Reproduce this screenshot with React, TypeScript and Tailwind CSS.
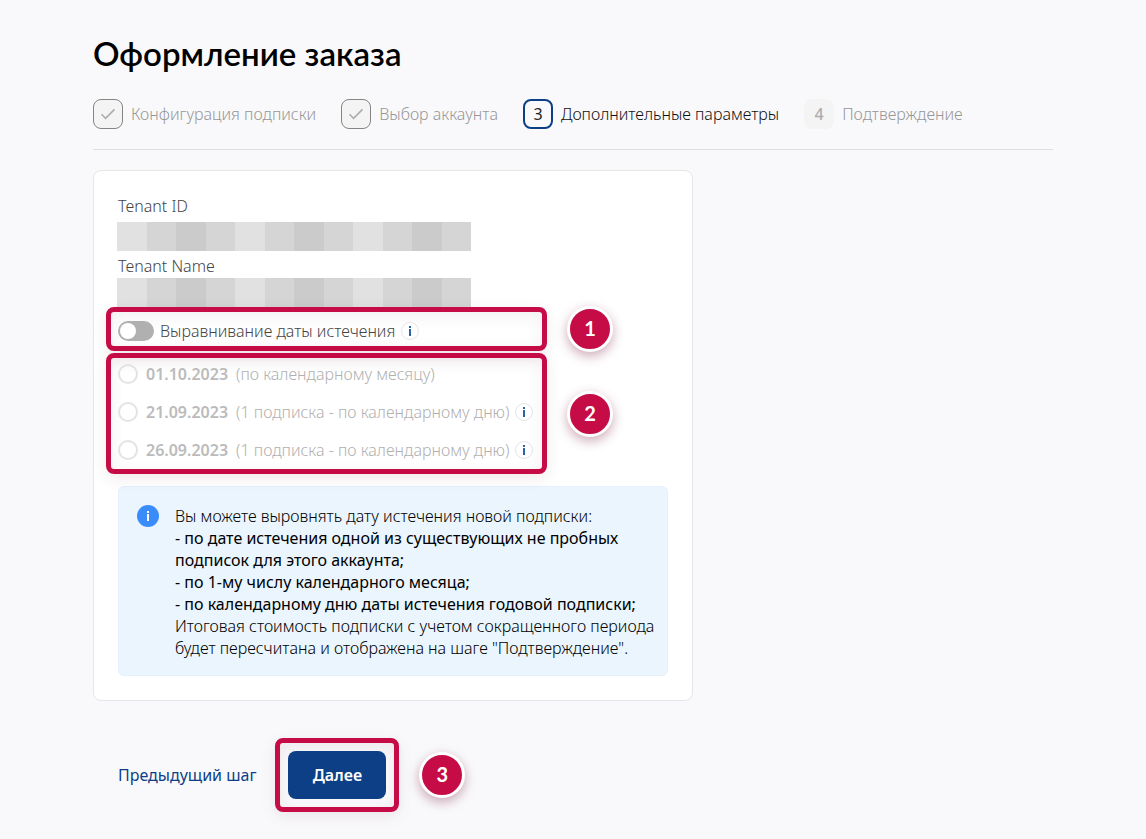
import React, { useState } from 'react';

interface Step {
  label: string;
  state: 'done' | 'current' | 'upcoming';
}

interface DateOption {
  date: string;
  note: string;
  hasInfo: boolean;
}

const steps: Step[] = [
  { label: 'Конфигурация подписки', state: 'done' },
  { label: 'Выбор аккаунта', state: 'done' },
  { label: 'Дополнительные параметры', state: 'current' },
  { label: 'Подтверждение', state: 'upcoming' }
];

const dateOptions: DateOption[] = [
  { date: '01.10.2023', note: '(по календарному месяцу)', hasInfo: false },
  { date: '21.09.2023', note: '(1 подписка - по календарному дню)', hasInfo: true },
  { date: '26.09.2023', note: '(1 подписка - по календарному дню)', hasInfo: true }
];

const maskCells = [
  'bg-[#e1e1e1]',
  'bg-[#d5d5d5]',
  'bg-[#cbcbcb]',
  'bg-[#d5d5d5]'
];

const stepBoxStyles = {
  done: 'border border-[#858585] bg-[#f4f4f4]',
  current: 'border-2 border-[#0d3f87] font-normal text-[#222222]',
  upcoming: 'bg-[#f4f4f4] text-[#adadad] font-medium'
};

const StepItem: React.FC<{ step: Step; number: number }> = ({ step, number }) => (
  <li
    className="flex items-center gap-2"
    aria-current={step.state === 'current' ? 'step' : undefined}
  >
    <span
      className={`flex h-[30px] w-[30px] shrink-0 items-center justify-center rounded-lg ${stepBoxStyles[step.state]}`}
    >
      {step.state === 'done' ? (
        <svg width="16" height="12" viewBox="0 0 16 12" fill="none" stroke="#adadad" strokeWidth="1.6">
          <path d="M1.5 6.2 5.6 10.3 14.5 1.4" />
        </svg>
      ) : (
        number
      )}
    </span>
    <span className={step.state === 'current' ? 'text-[#111111]' : 'text-[#979797]'}>{step.label}</span>
  </li>
);

// Masked value, shown instead of the real tenant data
const MaskedValue = () => (
  <div className="-ml-px flex h-[29px] w-[354px] max-w-full">
    {[0, 1, 2].map((group) =>
      maskCells.map((color, i) => <div key={`${group}-${i}`} className={`flex-1 ${color}`} />)
    )}
  </div>
);

const InfoHint = () => (
  <button
    type="button"
    aria-label="Подробнее"
    className="flex h-[18px] w-[18px] shrink-0 items-center justify-center rounded-full border border-[#e3e5ea] bg-white"
  >
    <svg width="4" height="10" viewBox="0 0 4 10" fill="#2a62ab">
      <rect x="1" y="0" width="2" height="2" />
      <rect x="1" y="3" width="2" height="7" />
    </svg>
  </button>
);

const Callout: React.FC<{ number: number; className: string; children: React.ReactNode }> = ({
  number,
  className,
  children
}) => (
  <div
    className={`relative rounded-lg border-[5px] border-[#c60c46] shadow-[0_4px_16px_rgba(90,10,40,0.09),inset_0_4px_16px_rgba(90,10,40,0.07)] ${className}`}
  >
    {children}
    <span className="absolute top-1/2 left-full ml-[25px] flex h-[46px] w-[46px] -translate-y-1/2 items-center justify-center rounded-full border-[3px] border-white bg-[#c60c46] pb-[2px] font-['Lato'] text-xl font-bold text-white shadow-[0_4px_12px_rgba(110,10,50,0.35)]">
      {number}
    </span>
  </div>
);

const App: React.FC = () => {
  const [aligned, setAligned] = useState(false);
  const [selected, setSelected] = useState('');

  return (
    <div className="min-h-screen bg-[#f9f9fb] pt-[33px] pb-[27px] font-['Noto_Sans',sans-serif] text-base leading-[22px] font-light text-black">
      <main className="mx-auto max-w-[960px]">
        <h1 className="font-['Lato','Noto_Sans',sans-serif] text-[33px] leading-10 font-semibold">Оформление заказа</h1>

        <ol className="mt-[26px] flex gap-[25px] border-b border-[#dedfe2] pb-5 whitespace-nowrap">
          {steps.map((step, i) => (
            <StepItem key={step.label} step={step} number={i + 1} />
          ))}
        </ol>

        <section className="mt-5 max-w-[600px] rounded-lg border border-[#e6e6e8] bg-white px-6 pt-6 pb-6">
          <div className="text-[#444444]">Tenant ID</div>
          <div className="mt-[5px]">
            <MaskedValue />
          </div>
          <div className="mt-1 mb-px text-[#444444]">Tenant Name</div>
          <MaskedValue />

          <Callout number={1} className="-ml-3 flex h-11 w-[441px] items-center gap-[6px] pt-1 pl-[7px]">
            <label className="flex items-center gap-[6px] text-[#444444]">
              <input
                type="checkbox"
                role="switch"
                checked={aligned}
                onChange={(e) => setAligned(e.target.checked)}
                className="h-5 w-9 appearance-none rounded-full bg-[#b0b0b0] before:mt-[2px] before:ml-[2px] before:block before:h-4 before:w-4 before:rounded-full before:bg-white checked:bg-[#0d3f87] checked:before:ml-[18px]"
              />
              Выравнивание даты истечения
            </label>
            <InfoHint />
          </Callout>

          <Callout
            number={2}
            className="mt-[2px] -ml-3 flex w-[441px] flex-col gap-[18px] pt-[6px] pb-[9px] pl-[7px]"
          >
            {dateOptions.map((option) => (
              <div key={option.date} className="flex h-5 items-center gap-[6px] whitespace-nowrap">
                <label className="flex items-center gap-2 text-[#b0b0b0]">
                  <input
                    type="radio"
                    name="expiration"
                    disabled={!aligned}
                    checked={selected === option.date}
                    onChange={() => setSelected(option.date)}
                    className="h-5 w-5 appearance-none rounded-full border-2 border-[#e3e3e6] checked:border-[6px] checked:border-[#0d3f87]"
                  />
                  <b className="font-semibold text-[#bbbbbb]">{option.date}</b>
                  <span>{option.note}</span>
                </label>
                {option.hasInfo && <InfoHint />}
              </div>
            ))}
          </Callout>

          <div className="mt-3 flex gap-4 rounded-md border border-[#e4f0fc] bg-[#eaf5fe] pt-[18px] pr-0 pb-4 pl-[18px]">
            <svg className="shrink-0" width="22" height="22" viewBox="0 0 22 22">
              <circle cx="11" cy="11" r="11" fill="#3b8cfb" />
              <rect x="10" y="6" width="2" height="2" fill="#ffffff" />
              <rect x="10" y="9" width="2" height="7" fill="#ffffff" />
            </svg>
            <div>
              <p>Вы можете выровнять дату истечения новой подписки:</p>
              <p className="font-normal">
                - по дате истечения одной из существующих не пробных
                <br />
                подписок для этого аккаунта;
                <br />
                - по 1-му числу календарного месяца;
                <br />- по календарному дню даты истечения годовой подписки;
              </p>
              <p>
                Итоговая стоимость подписки с учетом сокращенного периода
                <br />
                будет пересчитана и отображена на шаге "Подтверждение".
              </p>
            </div>
          </div>
        </section>

        <div className="mt-[37px] flex items-center gap-[19px] pl-[25px]">
          <a href="#" className="font-normal text-[#0d3f87]">
            Предыдущий шаг
          </a>
          <Callout number={3} className="p-2">
            <button type="button" className="h-12 w-[98px] rounded-lg bg-[#0d3f87] font-semibold text-white">
              Далее
            </button>
          </Callout>
        </div>
      </main>
    </div>
  );
};

export default App;
